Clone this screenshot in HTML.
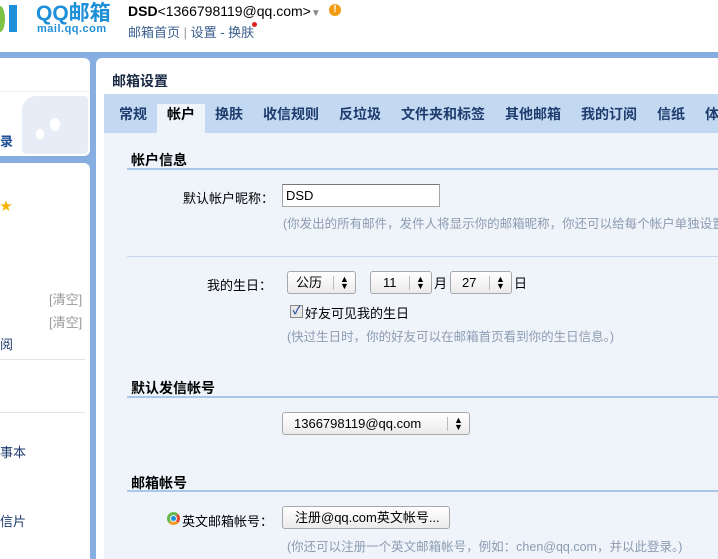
<!DOCTYPE html>
<html><head><meta charset="utf-8"><style>
*{margin:0;padding:0;box-sizing:border-box}
body{width:718px;height:559px;overflow:hidden;position:relative;background:#fff;font-family:"Liberation Sans","Noto Sans CJK SC",sans-serif;font-size:13px;color:#000}
.a{position:absolute;white-space:nowrap}
.blue{background:#86aee0}
.tab{position:absolute;top:94px;height:39px;line-height:40px;font-weight:bold;font-size:14px;color:#1e3c6e}
.sec{position:absolute;left:131px;font-weight:bold;font-size:14px}
.ln{position:absolute;left:127px;right:0;height:2px;background:#a9c7ea}
.hint{position:absolute;color:#8c9bb0;font-size:12.5px;white-space:nowrap;overflow:hidden}
.sel{position:absolute;height:23px;border:1px solid #a8a8a8;border-radius:3px;background:linear-gradient(#fff,#ebebeb);font-size:13px;line-height:22px;padding-left:8px}
.sel i{position:absolute;right:0;top:4px;width:22px;height:14px;border-left:1px solid #bbb;font-style:normal;font-size:9px;line-height:7px;text-align:center}
</style></head><body>
<div class="a" style="left:0;top:0;width:5px;height:35px;overflow:hidden"><div style="width:10px;height:26px;margin:6px 0 0 -5px;border-radius:50%;background:#7dc243"></div></div>
<div class="a" style="left:9px;top:5px;width:8px;height:27px;background:#1d8fd8"></div>
<div class="a" style="left:36px;top:1px;font-size:21px;font-weight:bold;color:#1d8fd8;line-height:26px">QQ邮箱</div>
<div class="a" style="left:37px;top:23px;font-size:11px;font-weight:bold;color:#1d8fd8;letter-spacing:0.5px">mail.qq.com</div>
<div class="a" style="left:128px;top:2px;font-size:14px;line-height:18px"><b>DSD</b>&lt;1366798119@qq.com&gt;<span style="color:#888;font-size:10px">▼</span></div>
<div class="a" style="left:329px;top:4px;width:12px;height:12px;border-radius:50%;background:#f39c12;color:#fff;font-size:10px;font-weight:bold;text-align:center;line-height:12px">!</div>
<div class="a" style="left:128px;top:22px;color:#3a5f8f;font-size:13px">邮箱首页<span style="color:#999"> | </span>设置 - 换肤</div>
<div class="a" style="left:252px;top:22px;width:5px;height:5px;border-radius:50%;background:#d22"></div>
<div class="a blue" style="left:0;top:52px;width:718px;height:507px"></div>
<div class="a" style="left:0;top:58px;width:90px;height:98px;background:#fff;border-radius:0 6px 6px 0"></div>
<div class="a" style="left:0;top:91px;width:90px;height:1px;background:#eef0f4"></div>
<div class="a" style="left:22px;top:96px;width:66px;height:58px;background:#e6edf6;border-radius:14px 4px 4px 4px"></div>
<div class="a" style="left:50px;top:118px;width:10px;height:13px;border-radius:50%;background:#fff"></div>
<div class="a" style="left:36px;top:129px;width:8px;height:11px;border-radius:50%;background:#fff"></div>
<div class="a" style="left:0;top:131px;font-size:13px;color:#1e4f96;font-weight:bold">录</div>
<div class="a" style="left:0;top:163px;width:90px;height:396px;background:#fff;border-radius:0 6px 0 0"></div>
<div class="a" style="left:0;top:197px;color:#f5b400;font-size:12px">★</div>
<div class="a" style="left:49px;top:289px;color:#999">[清空]</div>
<div class="a" style="left:49px;top:312px;color:#999">[清空]</div>
<div class="a" style="left:0;top:334px;color:#1e3c6e">阅</div>
<div class="a" style="left:0;top:359px;width:85px;height:1px;background:#dde3ea"></div>
<div class="a" style="left:0;top:412px;width:85px;height:1px;background:#dde3ea"></div>
<div class="a" style="left:0;top:442px;color:#1e3c6e">事本</div>
<div class="a" style="left:0;top:511px;color:#1e3c6e">信片</div>
<div class="a" style="left:96px;top:58px;width:622px;height:501px;background:#fff;border-radius:6px 0 0 0"></div>
<div class="a" style="left:112px;top:71px;font-size:14px;font-weight:bold;color:#1a2a44">邮箱设置</div>
<div class="a" style="left:104px;top:94px;width:614px;height:465px;background:#eff4fb"></div>
<div class="a" style="left:104px;top:94px;width:614px;height:39px;background:#c3d9f2"></div>
<div class="a" style="left:157px;top:104px;width:48px;height:29px;background:#eff4fb"></div>
<div class="tab" style="left:119px">常规</div>
<div class="tab" style="left:167px;color:#000">帐户</div>
<div class="tab" style="left:215px">换肤</div>
<div class="tab" style="left:263px">收信规则</div>
<div class="tab" style="left:339px">反垃圾</div>
<div class="tab" style="left:401px">文件夹和标签</div>
<div class="tab" style="left:505px">其他邮箱</div>
<div class="tab" style="left:581px">我的订阅</div>
<div class="tab" style="left:657px">信纸</div>
<div class="tab" style="left:705px;width:13px;overflow:hidden">体</div>
<div class="sec" style="top:150px">帐户信息</div>
<div class="ln" style="top:168px"></div>
<div class="a" style="left:183px;top:188px">默认帐户昵称：</div>
<div class="a" style="left:282px;top:184px;width:158px;height:23px;background:#fff;border:1px solid #a5a5a5;border-top-color:#777;padding-left:3px;line-height:21px;font-size:13px">DSD</div>
<div class="hint" style="left:283px;top:213px;width:435px">(你发出的所有邮件，发件人将显示你的邮箱昵称，你还可以给每个帐户单独设置昵称</div>
<div class="a" style="left:127px;top:256px;right:0;height:1px;background:#c8d7ea"></div>
<div class="a" style="left:207px;top:275px">我的生日：</div>
<div class="sel" style="left:287px;top:271px;width:69px">公历<i>▲<br>▼</i></div>
<div class="sel" style="left:370px;top:271px;width:62px;padding-left:12px">11<i>▲<br>▼</i></div>
<div class="a" style="left:434px;top:273px">月</div>
<div class="sel" style="left:450px;top:271px;width:62px;padding-left:11px">27<i>▲<br>▼</i></div>
<div class="a" style="left:514px;top:273px">日</div>
<div class="a" style="left:290px;top:305px;width:13px;height:13px;border:1px solid #8a8a8a;background:#e8e8e8;color:#2a4fa0;font-size:11px;line-height:11px;text-align:center;font-weight:bold">✓</div>
<div class="a" style="left:305px;top:303px">好友可见我的生日</div>
<div class="hint" style="left:287px;top:326px">(快过生日时，你的好友可以在邮箱首页看到你的生日信息。)</div>
<div class="sec" style="top:378px">默认发信帐号</div>
<div class="ln" style="top:396px"></div>
<div class="sel" style="left:282px;top:412px;width:188px;padding-left:11px">1366798119@qq.com<i>▲<br>▼</i></div>
<div class="sec" style="top:473px">邮箱帐号</div>
<div class="ln" style="top:490px"></div>
<div class="a" style="left:167px;top:512px;width:13px;height:13px;border-radius:50%;border:3px solid #6bb84a;border-right-color:#e64a2e;border-bottom-color:#f0a020"><div style="width:5px;height:5px;border-radius:50%;background:#1d8fd8;margin:1px"></div></div>
<div class="a" style="left:182px;top:511px">英文邮箱帐号：</div>
<div class="sel" style="left:282px;top:506px;width:168px;padding-left:12px">注册@qq.com英文帐号...</div>
<div class="hint" style="left:287px;top:536px">(你还可以注册一个英文邮箱帐号，例如：chen@qq.com，并以此登录。)</div>
</body></html>
